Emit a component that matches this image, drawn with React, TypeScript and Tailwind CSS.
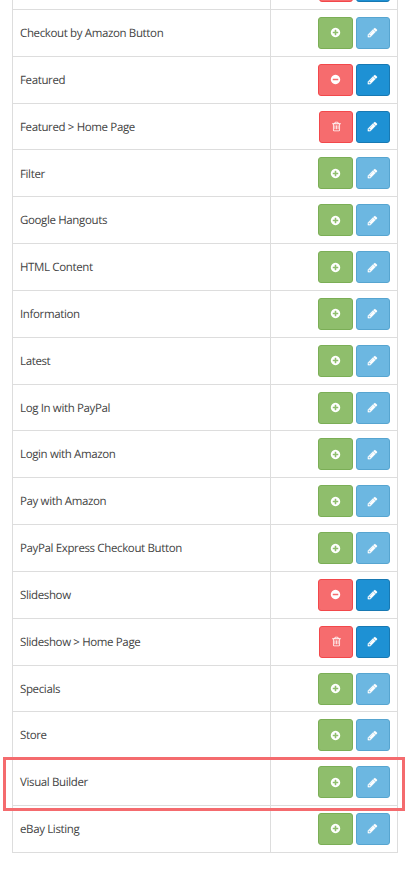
type Kind = "install" | "installed" | "module";

const rows: { name: string; kind: Kind; marked?: boolean }[] = [
  { name: "", kind: "module" },
  { name: "Checkout by Amazon Button", kind: "install" },
  { name: "Featured", kind: "installed" },
  { name: "Featured > Home Page", kind: "module" },
  { name: "Filter", kind: "install" },
  { name: "Google Hangouts", kind: "install" },
  { name: "HTML Content", kind: "install" },
  { name: "Information", kind: "install" },
  { name: "Latest", kind: "install" },
  { name: "Log In with PayPal", kind: "install" },
  { name: "Login with Amazon", kind: "install" },
  { name: "Pay with Amazon", kind: "install" },
  { name: "PayPal Express Checkout Button", kind: "install" },
  { name: "Slideshow", kind: "installed" },
  { name: "Slideshow > Home Page", kind: "module" },
  { name: "Specials", kind: "install" },
  { name: "Store", kind: "install" },
  { name: "Visual Builder", kind: "install", marked: true },
  { name: "eBay Listing", kind: "install" },
];

const icons = {
  plus: "M1344 960v-128q0-26-19-45t-45-19h-256v-256q0-26-19-45t-45-19h-128q-26 0-45 19t-19 45v256h-256q-26 0-45 19t-19 45v128q0 26 19 45t45 19h256v256q0 26 19 45t45 19h128q26 0 45-19t19-45v-256h256q26 0 45-19t19-45zm320-64q0 209-103 385.5t-279.5 279.5-385.5 103-385.5-103-279.5-279.5-103-385.5 103-385.5 279.5-279.5 385.5-103 385.5 103 279.5 279.5 103 385.5z",
  minus:
    "M1344 960v-128q0-26-19-45t-45-19h-768q-26 0-45 19t-19 45v128q0 26 19 45t45 19h768q26 0 45-19t19-45zm320-64q0 209-103 385.5t-279.5 279.5-385.5 103-385.5-103-279.5-279.5-103-385.5 103-385.5 279.5-279.5 385.5-103 385.5 103 279.5 279.5 103 385.5z",
  pencil:
    "M491 1536l91-91-235-235-91 91v107h128v128h107zm523-928q0-22-22-22-10 0-17 7l-542 542q-7 7-7 17 0 22 22 22 10 0 17-7l542-542q7-7 7-17zm-54-192l416 416-832 832h-416v-416zm683 96q0 53-37 90l-166 166-416-416 166-165q36-38 90-38 53 0 91 38l235 234q37 39 37 91z",
  trash:
    "M704 736v576q0 14-9 23t-23 9h-64q-14 0-23-9t-9-23v-576q0-14 9-23t23-9h64q14 0 23 9t9 23zm256 0v576q0 14-9 23t-23 9h-64q-14 0-23-9t-9-23v-576q0-14 9-23t23-9h64q14 0 23 9t9 23zm256 0v576q0 14-9 23t-23 9h-64q-14 0-23-9t-9-23v-576q0-14 9-23t23-9h64q14 0 23 9t9 23zm128 724v-948h-896v948q0 22 7 40.5t14.5 27 10.5 8.5h832q3 0 10.5-8.5t14.5-27 7-40.5zm-672-1076h448l-48-117q-7-9-17-11h-317q-10 2-17 11zm928 32v64q0 14-9 23t-23 9h-96v948q0 83-47 143.5t-113 60.5h-832q-66 0-113-58.5t-47-141.5v-952h-96q-14 0-23-9t-9-23v-64q0-14 9-23t23-9h309l70-167q15-37 54-63t79-26h320q40 0 79 26t54 63l70 167h309q14 0 23 9t9 23z",
};

const actions: Record<Kind, { icon: keyof typeof icons; style: string }> = {
  install: { icon: "plus", style: "w-[35px] bg-[#8fbe6c] border-[#7bae56]" },
  installed: { icon: "minus", style: "w-[35px] bg-[#f66c6e] border-[#f2484b]" },
  module: { icon: "trash", style: "w-[34px] bg-[#f66c6e] border-[#f2484b]" },
};

function Button({ icon, style }: { icon: keyof typeof icons; style: string }) {
  return (
    <button
      className={`flex h-8 items-center justify-center rounded-[3px] border text-white ${style}`}
    >
      <svg
        viewBox="0 0 1792 1792"
        className={icon === "pencil" ? "mr-px size-[11px]" : "size-[11px]"}
        fill="currentColor"
        stroke="currentColor"
        strokeWidth={icon === "pencil" ? 30 : 0}
      >
        <path d={icons[icon]} />
      </svg>
    </button>
  );
}

export default function App() {
  return (
    <main className="h-[869px] overflow-hidden bg-white pl-3 font-['Open_Sans',sans-serif] text-[11.5px] tracking-[-0.365px] text-[#444] [text-rendering:geometricPrecision]">
      <div className="-mt-[36.83px] w-[386px] border-l border-[#dddddd]">
        {rows.map(({ name, kind, marked }, i) => (
          <div
            key={i}
            className="relative grid h-[46.83px] grid-cols-[257px_1fr] border-r border-b border-[#dddddd]"
          >
            <div className="flex items-center pt-[1.5px] pl-[7px]">{name}</div>
            <div className="flex items-center justify-end gap-[3px] border-l border-[#dddddd] pr-[7px]">
              <Button {...actions[kind]} />
              <Button
                icon="pencil"
                style={
                  kind === "install"
                    ? "w-[34px] bg-[#6cb7e1] border-[#57a5d0]"
                    : "w-[34px] bg-[#1e91d4] border-[#1879b3]"
                }
              />
            </div>
            {marked && (
              <div className="absolute -top-[2px] -left-[10px] z-10 h-[54px] w-[402px] border-3 border-[#f46b6e]" />
            )}
          </div>
        ))}
      </div>
    </main>
  );
}
